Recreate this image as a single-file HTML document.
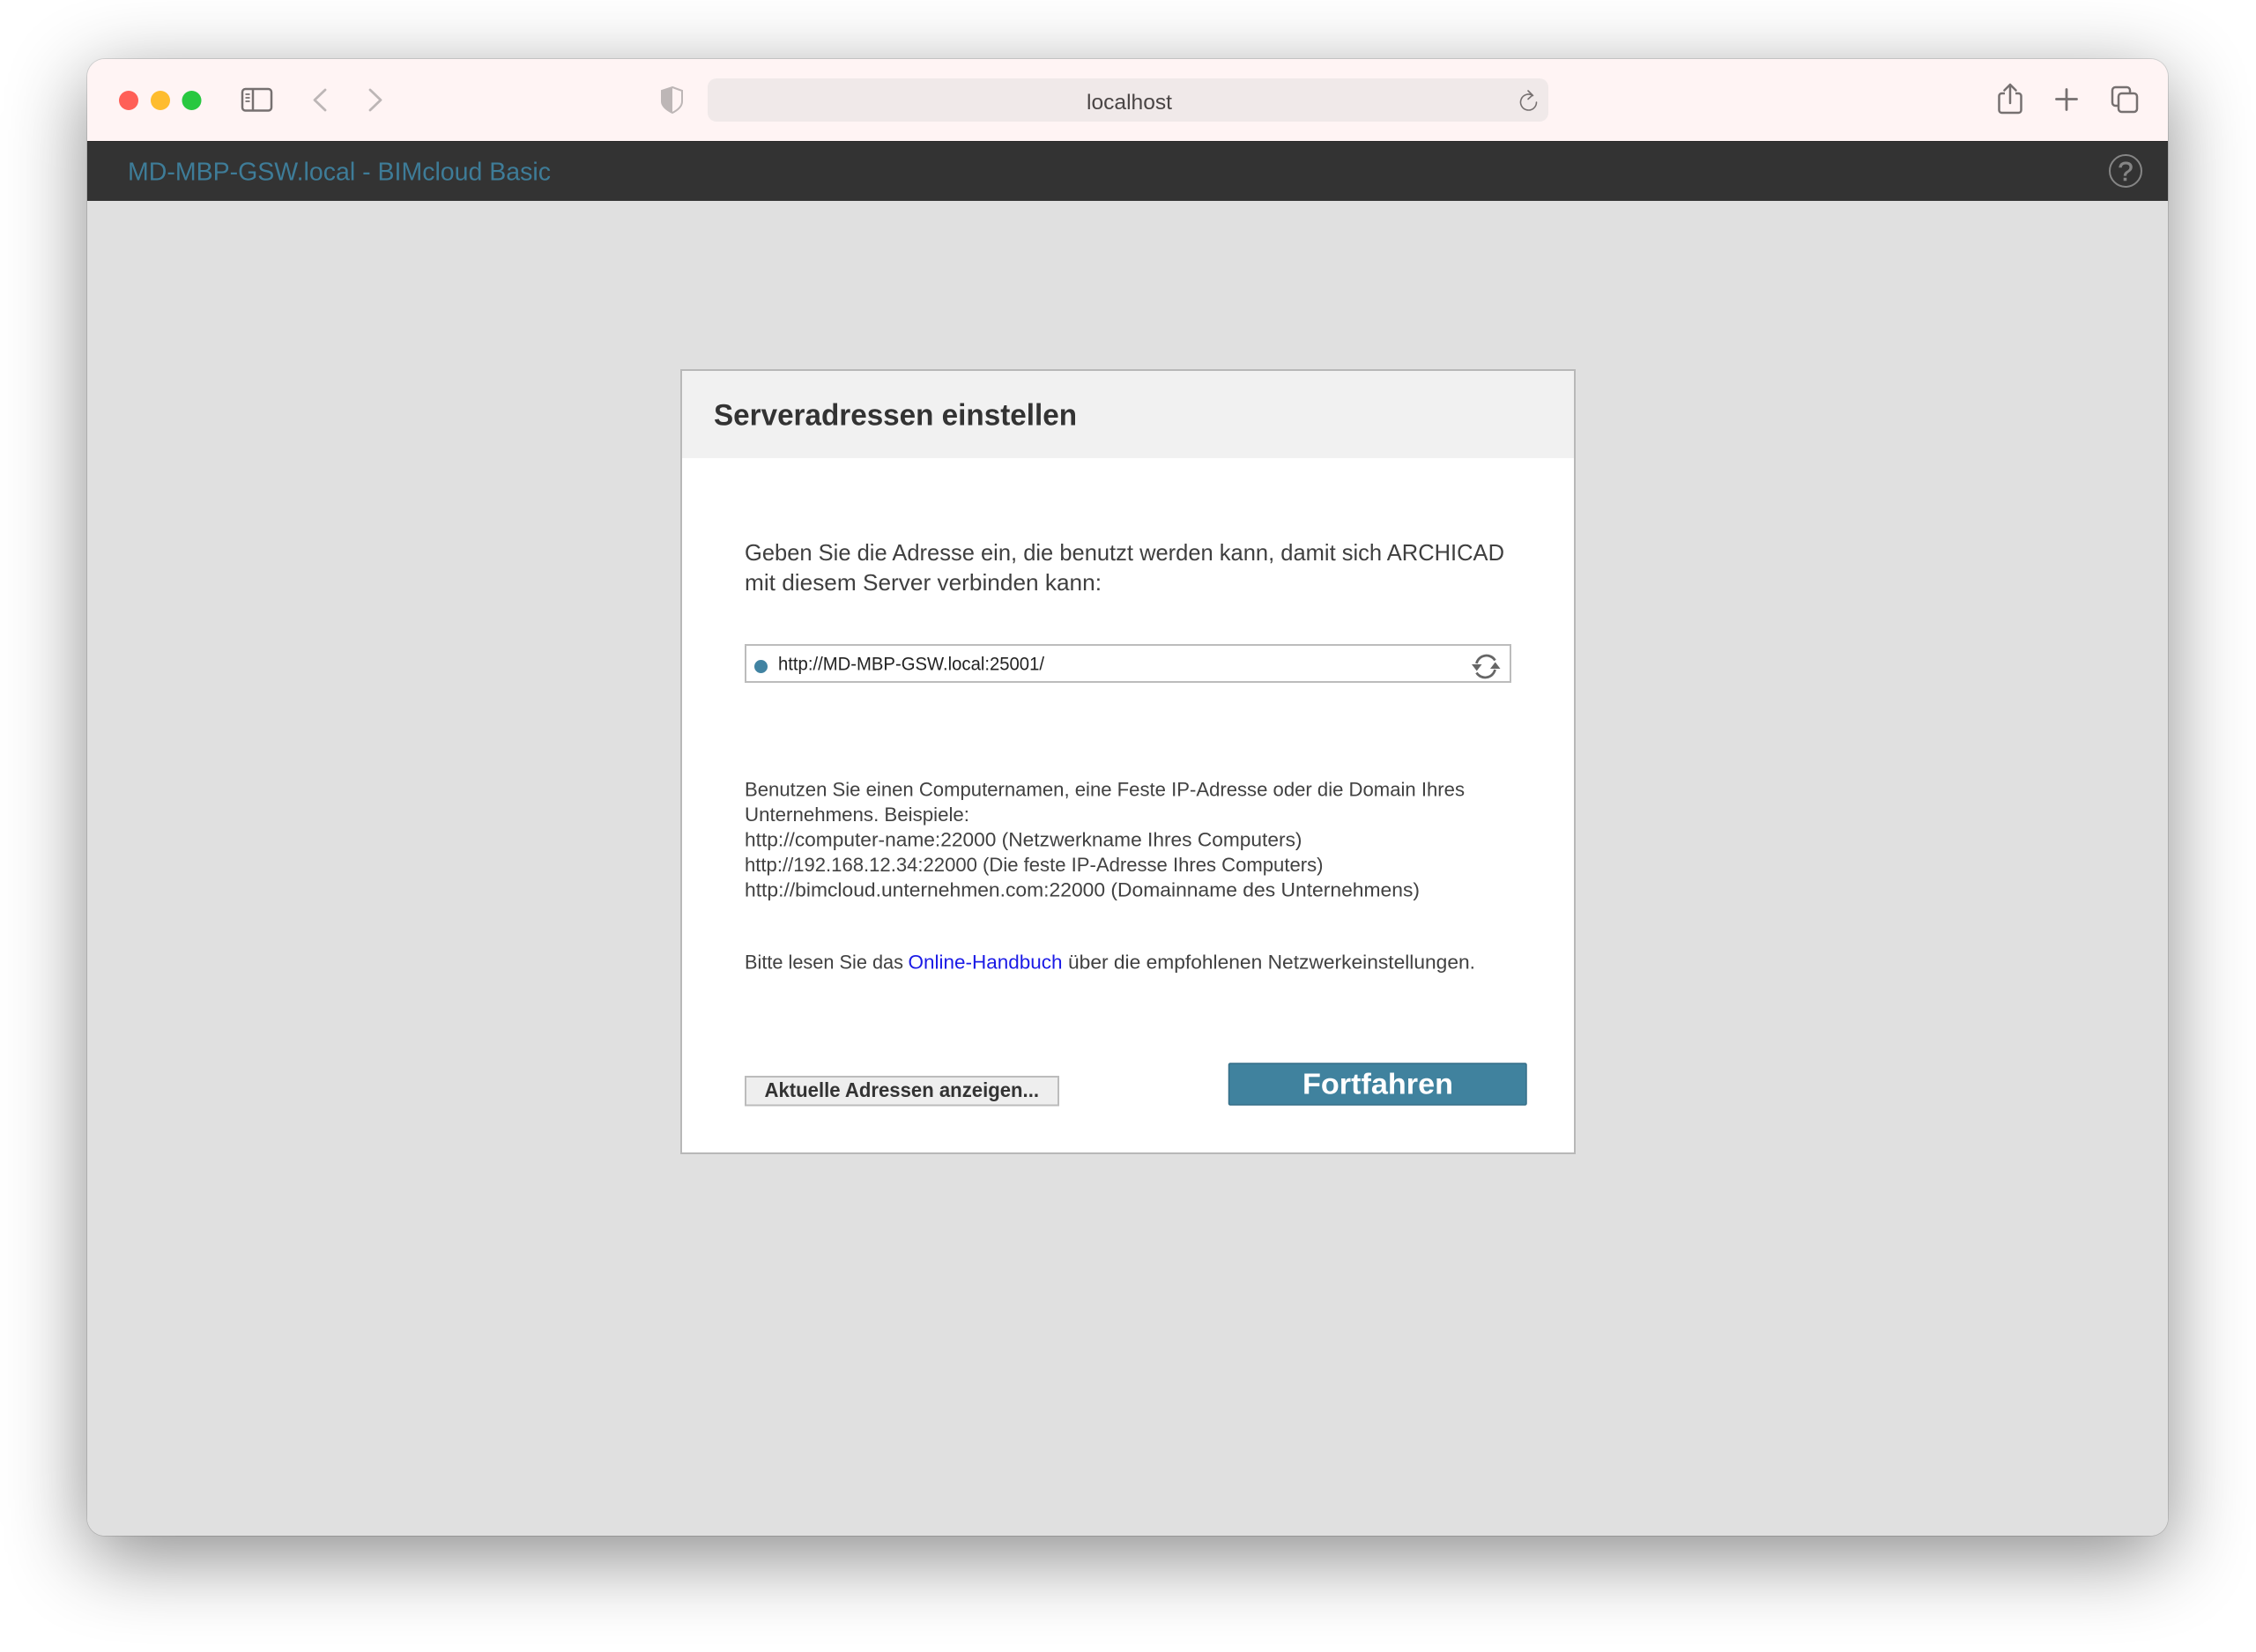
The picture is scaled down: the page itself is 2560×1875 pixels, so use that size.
<!DOCTYPE html>
<html lang="de">
<head>
<meta charset="utf-8">
<title>localhost</title>
<style>
html,body{margin:0;padding:0;width:2560px;height:1875px;background:#fff;overflow:hidden}
#win{position:absolute;left:99px;top:67px;width:2361px;height:1676px;border-radius:20px;background:#e0e0e0;overflow:hidden}
#shadow{position:absolute;left:99px;top:67px;width:2361px;height:1676px;border-radius:20px;box-shadow:0 24px 90px rgba(0,0,0,.46),0 0 0 1px rgba(0,0,0,.12)}
#tb{position:absolute;left:0;top:0;width:100%;height:93px;background:#fff4f4}
#bar{position:absolute;left:0;top:93px;width:100%;height:68px;background:#333;border-top:1px solid #2a2a2a;box-sizing:border-box}
svg{position:absolute;left:0;top:0}
text{font-family:"Liberation Sans",Arial,sans-serif}
</style>
</head>
<body>
<div id="shadow"></div>
<div id="win"><div id="tb"></div><div id="bar"></div></div>
<svg width="2560" height="1875" viewBox="0 0 2560 1875" xmlns="http://www.w3.org/2000/svg">
  <!-- traffic lights -->
  <circle cx="146" cy="114" r="11" fill="#ff5f57"/>
  <circle cx="182" cy="114" r="11" fill="#febc2e"/>
  <circle cx="217.500" cy="114" r="11" fill="#28c840"/>
  <!-- sidebar -->
  <rect x="275" y="101" width="33" height="24.500" rx="3.500" fill="none" stroke="#767070" stroke-width="2.500"/>
  <path d="M287 101v24.500" stroke="#767070" stroke-width="2.500"/>
  <path d="M278.500 107h5M278.500 111h5M278.500 115h5" stroke="#767070" stroke-width="1.800"/>
  <!-- chevrons -->
  <path d="M369 102l-12 11.500 12 11.500" fill="none" stroke="#bdb6b6" stroke-width="2.800" stroke-linecap="round" stroke-linejoin="round"/>
  <path d="M420 102l12 11.500-12 11.500" fill="none" stroke="#bdb6b6" stroke-width="2.800" stroke-linecap="round" stroke-linejoin="round"/>
  <!-- shield -->
  <path d="M763 99l11 4v12c0 6-5 10-11 13c-6-3-12-7-12-13v-12z" fill="#fff4f4" stroke="#bdb6b6" stroke-width="2"/>
  <path d="M763 99l-12 4v12c0 6 6 10 12 13z" fill="#bdb6b6"/>
  <!-- address bar -->
  <rect x="803" y="89" width="954" height="49" rx="10" fill="#f0e9e9"/>
  <text x="1233" y="124" font-size="24" fill="#4a4545" textLength="97" lengthAdjust="spacingAndGlyphs">localhost</text>
  <path d="M1739.500 108.500a9 9 0 1 0 4 7.500" fill="none" stroke="#767070" stroke-width="1.600" stroke-linecap="round"/>
  <path d="M1734 103l5 5-5 4.500" fill="none" stroke="#767070" stroke-width="1.600" stroke-linecap="round" stroke-linejoin="round"/>
  <!-- share -->
  <path d="M2275 106h-3.500a3 3 0 0 0-3 3v16a3 3 0 0 0 3 3h19a3 3 0 0 0 3-3v-16a3 3 0 0 0-3-3h-3.500" fill="none" stroke="#767070" stroke-width="2.500"/>
  <path d="M2281 117V96.500M2274.500 102.500l6.500-6.500 6.500 6.500" fill="none" stroke="#767070" stroke-width="2.500" stroke-linecap="round" stroke-linejoin="round"/>
  <!-- plus -->
  <path d="M2345 101.500v23M2333.500 112.500h23" stroke="#767070" stroke-width="2.800" stroke-linecap="round"/>
  <!-- tabs -->
  <path d="M2403 120h-2.500a3.500 3.500 0 0 1-3.500-3.500v-14a3.500 3.500 0 0 1 3.500-3.500h13a3.500 3.500 0 0 1 3.500 3.500v3" fill="none" stroke="#767070" stroke-width="2.500"/>
  <rect x="2404" y="106" width="21" height="21" rx="3.500" fill="none" stroke="#767070" stroke-width="2.500"/>
  <!-- dark bar -->
  <text x="145" y="204.500" font-size="29" fill="#3e7c98" textLength="480" lengthAdjust="spacingAndGlyphs">MD-MBP-GSW.local - BIMcloud Basic</text>
  <circle cx="2412" cy="194" r="18" fill="none" stroke="#858585" stroke-width="2"/>
  <text x="2412" y="205" font-size="31" fill="#858585" text-anchor="middle" stroke="#858585" stroke-width=".6">?</text>
  <!-- dialog -->
  <rect x="773" y="420" width="1014" height="889" fill="#fff" stroke="#b8b8b8" stroke-width="2"/>
  <rect x="774" y="421" width="1012" height="99" fill="#f1f1f1"/>
  <text x="810" y="482.500" font-size="34" font-weight="bold" fill="#333" textLength="412" lengthAdjust="spacingAndGlyphs">Serveradressen einstellen</text>
  <text x="845" y="636" font-size="26" fill="#3f3f3f" textLength="862" lengthAdjust="spacingAndGlyphs">Geben Sie die Adresse ein, die benutzt werden kann, damit sich ARCHICAD</text>
  <text x="845" y="670" font-size="26" fill="#3f3f3f" textLength="405" lengthAdjust="spacingAndGlyphs">mit diesem Server verbinden kann:</text>
  <!-- input -->
  <rect x="846" y="732" width="868" height="42" fill="#fff" stroke="#bcbcbc" stroke-width="2"/>
  <circle cx="863.500" cy="756.500" r="7.500" fill="#4183a2"/>
  <text x="883" y="760.500" font-size="21" fill="#222" textLength="302" lengthAdjust="spacingAndGlyphs">http://MD-MBP-GSW.local:25001/</text>
  <!-- refresh -->
  <path d="M1675.500 753a11.500 11.500 0 0 1 21-3.500M1696.500 760a11.500 11.500 0 0 1-21 3.500" fill="none" stroke="#666" stroke-width="2.800"/>
  <path d="M1670 754h11.500l-5.750 7.500zM1702.500 759h-11.500l5.750-7.500z" fill="#666"/>
  <!-- help text -->
  <g font-size="22" fill="#414141">
    <text x="845" y="903.500" textLength="817" lengthAdjust="spacingAndGlyphs">Benutzen Sie einen Computernamen, eine Feste IP-Adresse oder die Domain Ihres</text>
    <text x="845" y="932" textLength="255" lengthAdjust="spacingAndGlyphs">Unternehmens. Beispiele:</text>
    <text x="845" y="960.500" textLength="632.500" lengthAdjust="spacingAndGlyphs">http://computer-name:22000 (Netzwerkname Ihres Computers)</text>
    <text x="845" y="989" textLength="656.500" lengthAdjust="spacingAndGlyphs">http://192.168.12.34:22000 (Die feste IP-Adresse Ihres Computers)</text>
    <text x="845" y="1017.500" textLength="766" lengthAdjust="spacingAndGlyphs">http://bimcloud.unternehmen.com:22000 (Domainname des Unternehmens)</text>
    <text x="845" y="1099.500" textLength="180" lengthAdjust="spacingAndGlyphs">Bitte lesen Sie das</text>
    <text x="1030.500" y="1099.500" fill="#1a1ae6" textLength="175" lengthAdjust="spacingAndGlyphs">Online-Handbuch</text>
    <text x="1212" y="1099.500" textLength="462" lengthAdjust="spacingAndGlyphs">über die empfohlenen Netzwerkeinstellungen.</text>
  </g>
  <!-- buttons -->
  <rect x="846" y="1222" width="355" height="32.500" fill="#eeeeee" stroke="#bcbcbc" stroke-width="2"/>
  <text x="867.500" y="1245" font-size="23.500" font-weight="bold" fill="#333" textLength="311.500" lengthAdjust="spacingAndGlyphs">Aktuelle Adressen anzeigen...</text>
  <rect x="1394.500" y="1207" width="337.500" height="47" rx="1.500" fill="#40829e" stroke="#356f88" stroke-width="1.500"/>
  <text x="1478" y="1241.500" font-size="33" font-weight="bold" fill="#fff" textLength="171" lengthAdjust="spacingAndGlyphs">Fortfahren</text>
</svg>
</body>
</html>
